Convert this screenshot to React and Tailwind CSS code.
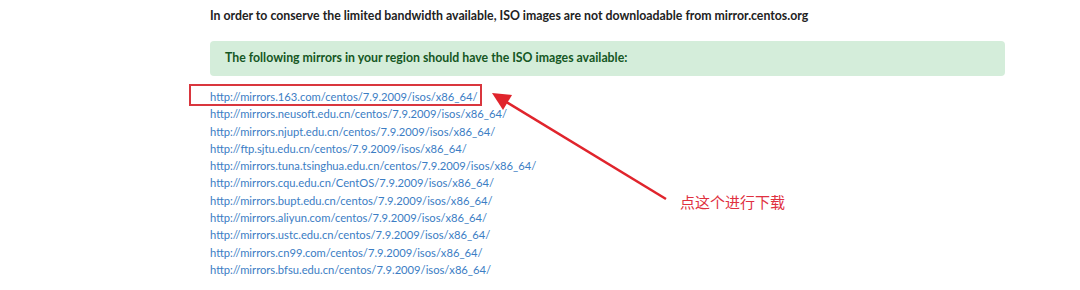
import React from "react";

const links = [
  "http://mirrors.163.com/centos/7.9.2009/isos/x86_64/",
  "http://mirrors.neusoft.edu.cn/centos/7.9.2009/isos/x86_64/",
  "http://mirrors.njupt.edu.cn/centos/7.9.2009/isos/x86_64/",
  "http://ftp.sjtu.edu.cn/centos/7.9.2009/isos/x86_64/",
  "http://mirrors.tuna.tsinghua.edu.cn/centos/7.9.2009/isos/x86_64/",
  "http://mirrors.cqu.edu.cn/CentOS/7.9.2009/isos/x86_64/",
  "http://mirrors.bupt.edu.cn/centos/7.9.2009/isos/x86_64/",
  "http://mirrors.aliyun.com/centos/7.9.2009/isos/x86_64/",
  "http://mirrors.ustc.edu.cn/centos/7.9.2009/isos/x86_64/",
  "http://mirrors.cn99.com/centos/7.9.2009/isos/x86_64/",
  "http://mirrors.bfsu.edu.cn/centos/7.9.2009/isos/x86_64/",
];

export default function App() {
  return (
    <div
      className="relative w-[1080px] h-[290px] bg-white overflow-hidden"
      style={{ fontFamily: 'Lato, "Open Sans", sans-serif' }}
    >
      <div className="pl-[210px] pr-[75px] pt-[7px]">
        <p className="text-[12.3px] font-bold text-[#222] leading-[18px]">
          In order to conserve the limited bandwidth available, ISO images are not downloadable from mirror.centos.org
        </p>
        <div className="mt-[16px] bg-[#d4edda] rounded-[4px] h-[35px] flex items-center px-[15px]">
          <p className="text-[12.3px] font-bold text-[#155724]">
            The following mirrors in your region should have the ISO images available:
          </p>
        </div>
        <ul className="mt-[12px] flex flex-col">
          {links.map((l) => (
            <li key={l} className="text-[11.2px] leading-[17.3px] text-[#3b7dc4]">
              {l}
            </li>
          ))}
        </ul>
      </div>

      <div className="absolute left-[189px] top-[84px] w-[293px] h-[22px] border-2 border-[#d9363e]" />

      <svg className="absolute left-0 top-0" width="1080" height="290">
        <line x1="666" y1="199" x2="503" y2="100" stroke="#e0242c" strokeWidth="2.5" />
        <polygon points="492,93 512,95 503,110" fill="#e0242c" />
      </svg>

      <div
        className="absolute left-[680px] top-[191px] text-[15px] text-[#e0303f]"
        style={{ fontFamily: '"Noto Sans CJK SC", sans-serif' }}
      >
        点这个进行下载
      </div>
    </div>
  );
}
